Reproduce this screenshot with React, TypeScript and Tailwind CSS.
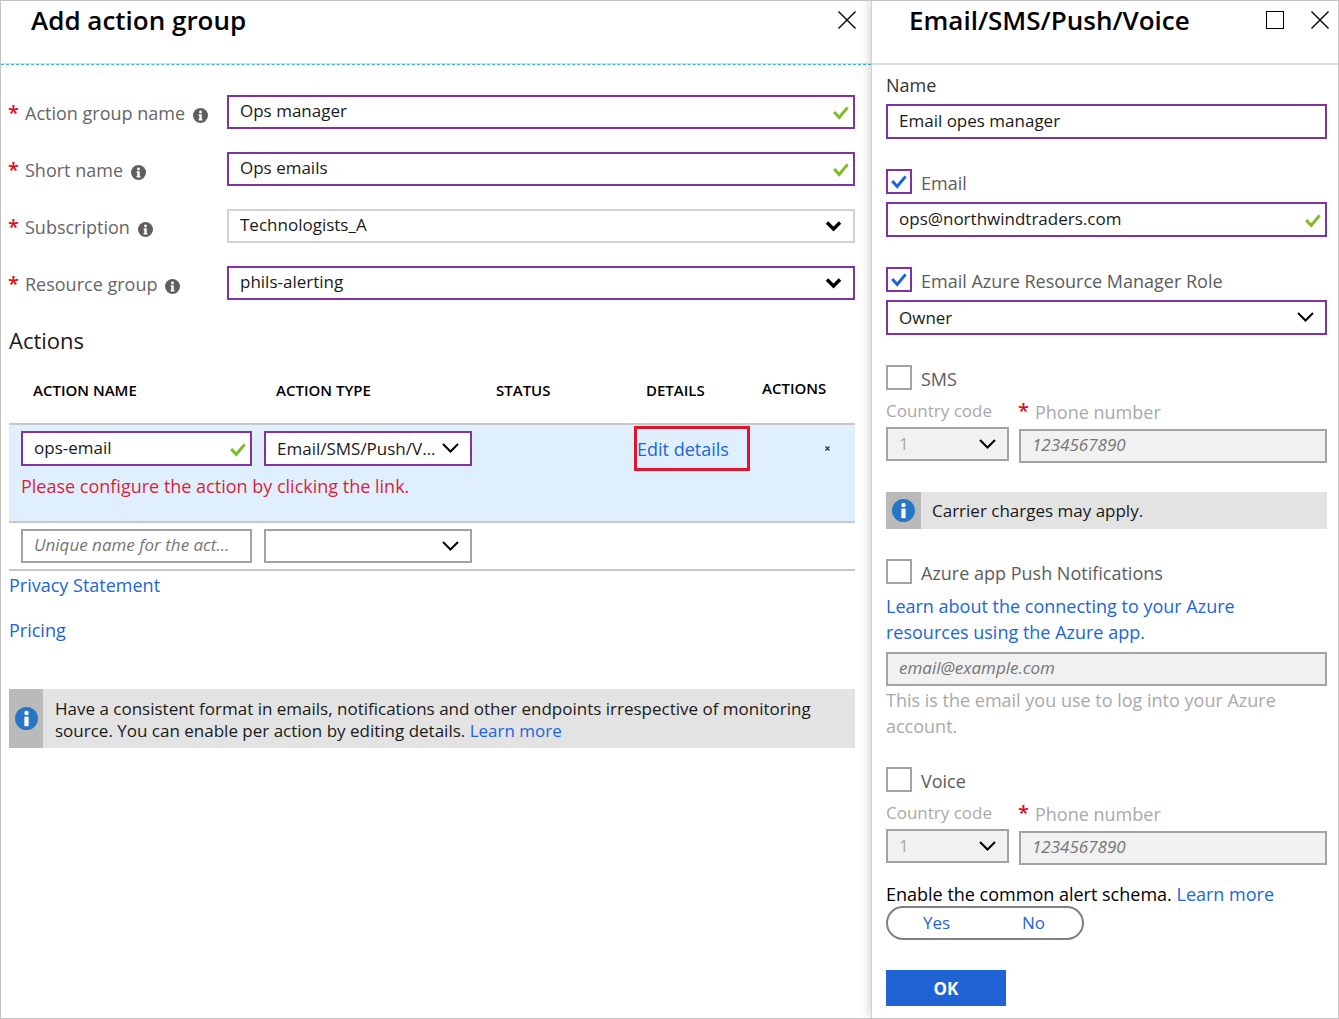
import React from "react";

const label = "text-lg leading-[26px]";
const box =
  "block w-full border-2 pl-[11px] text-[17px] leading-5 outline-none rounded-none text-ellipsis placeholder:italic placeholder:text-[#767676] placeholder:opacity-100";
const purple = "border-[#8133a3] bg-white text-[#1a1a1a]";
const gray = "border-[#a3a3a3] bg-white text-[#1a1a1a]";
const disabledBox = "h-[34px] border-[#a3a3a3] bg-[#f1f1f1] text-[#a9a9a9]";
const link = "text-[#2165d8] hover:underline";

function CloseIcon() {
  return (
    <svg width="20" height="20" viewBox="0 0 20 20" fill="none" stroke="#111" strokeWidth="1.5">
      <path d="M1.5 1.5 18.5 18.5M18.5 1.5 1.5 18.5" />
    </svg>
  );
}

function Check({ color, className }: { color: string; className: string }) {
  return (
    <svg className={`pointer-events-none absolute ${className}`} width="16" height="14" viewBox="0 0 16 14" fill="none" stroke={color} strokeWidth="3">
      <path d="M1.2 6 6.2 11.4 14.6 1.4" />
    </svg>
  );
}

function Chevron({ bold }: { bold?: boolean }) {
  return (
    <svg
      className="pointer-events-none absolute top-[11px] right-3"
      width="18"
      height="12"
      viewBox="0 0 18 12"
      fill="none"
      stroke="#000"
      strokeWidth={bold ? 3.4 : 2}
    >
      <path d={bold ? "M2 2.500 8.500 9 15 2.500" : "M1 2 8.500 9.500 16 2"} />
    </svg>
  );
}

function InfoDot() {
  return (
    <svg className="shrink-0" width="15" height="15" viewBox="0 0 24 24" aria-hidden="true">
      <circle cx="12" cy="12" r="12" fill="#5f5f5f" />
      <circle cx="12" cy="6.3" r="2.3" fill="#fff" />
      <path d="M9 10h5v7.5h1V20H9v-2.5h1v-5H9z" fill="#fff" />
    </svg>
  );
}

function NoticeDot() {
  return (
    <svg className="shrink-0" width="23" height="23" viewBox="0 0 24 24" aria-hidden="true">
      <circle cx="12" cy="12" r="12" fill="#2776c6" />
      <circle cx="12" cy="6.3" r="2.3" fill="#fff" />
      <path d="M9.8 10h4.4v10H9.8z" fill="#fff" />
    </svg>
  );
}

function Select({
  id,
  value,
  tone,
  bold,
  disabled,
  aria,
}: {
  id: string;
  value: string;
  tone: string;
  bold?: boolean;
  disabled?: boolean;
  aria?: string;
}) {
  return (
    <div className="relative">
      <select id={id} disabled={disabled} aria-label={aria} className={`${box} ${tone} appearance-none truncate pr-[30px] opacity-100`}>
        <option>{value}</option>
      </select>
      <Chevron bold={bold} />
    </div>
  );
}

function Asterisk() {
  return <span className="-ml-px w-[9px] text-xl leading-6 font-semibold text-[#e00b1c]">*</span>;
}

function FormRow({ id, title, children }: { id: string; title: string; children: React.ReactNode }) {
  return (
    <div className="flex h-[34px] items-center">
      <div className="flex w-[218px] shrink-0 items-center gap-2 pt-0.5">
        <Asterisk />
        <label htmlFor={id} className={`${label} whitespace-nowrap text-[#666]`}>
          {title}
        </label>
        <span className="pt-1">
          <InfoDot />
        </span>
      </div>
      <div className="min-w-0 flex-1">{children}</div>
    </div>
  );
}

function CheckRow({ id, title, checked }: { id: string; title: string; checked?: boolean }) {
  return (
    <div className="flex h-[25px] items-center gap-[9px]">
      <span className="relative block h-[25px] w-[26px]">
        <input
          id={id}
          type="checkbox"
          defaultChecked={checked}
          className="peer block h-[25px] w-[26px] appearance-none border-2 border-[#a3a3a3] bg-white checked:border-[#8133a3]"
        />
        <Check color="#1f62d6" className="top-1.5 left-[5px] hidden peer-checked:block" />
      </span>
      <label htmlFor={id} className={`${label} pt-0.5 text-[#5c5c5c]`}>
        {title}
      </label>
    </div>
  );
}

function PhoneFields({ prefix }: { prefix: string }) {
  return (
    <div className="mt-2 flex gap-[10px]">
      <div className="w-[123px] shrink-0">
        <label htmlFor={`${prefix}-code`} className="mb-[3px] block text-[17px] leading-[26px] text-[#a9a9a9]">
          Country code
        </label>
        <Select id={`${prefix}-code`} value="1" tone={disabledBox} disabled />
      </div>
      <div className="min-w-0 flex-1">
        <label htmlFor={`${prefix}-phone`} className={`${label} mb-1 flex gap-2 pt-px text-[#a9a9a9]`}>
          <Asterisk />
          Phone number
        </label>
        <input id={`${prefix}-phone`} disabled placeholder="1234567890" className={`${box} ${disabledBox} pb-1 pl-3`} />
      </div>
    </div>
  );
}

function ActionGroupPanel() {
  const head = "text-left align-middle text-[15px] leading-5 font-semibold";
  return (
    <main className="min-w-0 flex-1">
      <header className="flex h-[62px] items-start justify-between pr-[14px] pl-[30px]">
        <h1 className="pt-[3px] text-[26px] leading-8 font-semibold">Add action group</h1>
        <button aria-label="Close" className="pt-[9px]">
          <CloseIcon />
        </button>
      </header>
      <div className="border-t border-[#dcdcdc]">
        <div className="border-t border-dashed border-[#35b4ea]" />
      </div>
      <div className="pt-[30px] pr-4 pl-2">
        <form className="flex flex-col gap-[23px]">
          <FormRow id="group-name" title="Action group name">
            <div className="relative">
              <input id="group-name" defaultValue="Ops manager" className={`${box} ${purple} h-[34px] pb-1`} />
              <Check color="#7fba27" className="top-[11px] right-[6px]" />
            </div>
          </FormRow>
          <FormRow id="short-name" title="Short name">
            <div className="relative">
              <input id="short-name" defaultValue="Ops emails" className={`${box} ${purple} h-[34px] pb-1`} />
              <Check color="#7fba27" className="top-[11px] right-[6px]" />
            </div>
          </FormRow>
          <FormRow id="subscription" title="Subscription">
            <Select id="subscription" value="Technologists_A" tone="h-[34px] border-[#d2d2d2] bg-white pb-0.5 text-[#1a1a1a]" bold />
          </FormRow>
          <FormRow id="resource-group" title="Resource group">
            <Select id="resource-group" value="phils-alerting" tone={`${purple} h-[34px] pb-0.5`} bold />
          </FormRow>
        </form>

        <h2 className="mt-6 mb-px text-[22px] leading-8 text-[#1a1a1a]">Actions</h2>

        <table className="w-full table-fixed border-collapse">
          <colgroup>
            <col className="w-[243px]" />
            <col className="w-[220px]" />
            <col className="w-[162px]" />
            <col className="w-[116px]" />
            <col />
          </colgroup>
          <thead>
            <tr className="h-[67px] border-b-2 border-[#c8c8c8]">
              <th className={`${head} pl-6`}>ACTION NAME</th>
              <th className={`${head} pl-6`}>ACTION TYPE</th>
              <th className={`${head} pl-6`}>STATUS</th>
              <th className={`${head} pl-3`}>DETAILS</th>
              <th className={`${head} pb-1 pl-3`}>ACTIONS</th>
            </tr>
          </thead>
          <tbody>
            <tr className="bg-[#e0effe]">
              <td className="pt-[6px] pl-3">
                <div className="relative">
                  <input aria-label="Action name" defaultValue="ops-email" className={`${box} ${purple} h-[35px] pb-0.5`} />
                  <Check color="#7fba27" className="top-3 right-[6px]" />
                </div>
              </td>
              <td className="pt-[6px] pl-3">
                <Select id="type-1" aria="Action type" value="Email/SMS/Push/Voice" tone={`${purple} h-[35px]`} />
              </td>
              <td />
              <td className="relative pt-[6px] pl-[3px]">
                <a href="#details" className={`${link} text-lg`}>
                  Edit details
                </a>
                <span className="pointer-events-none absolute top-px left-0 h-[45px] w-[116px] border-[3px] border-[#e0142c]" />
              </td>
              <td className="pt-[6px] pl-[75px]">
                <button aria-label="Remove action" className="flex">
                  <svg width="5" height="5" viewBox="0 0 5 5" stroke="#333" strokeWidth="1.3">
                    <path d="M.5.5 4.5 4.5M4.5.5.5 4.5" />
                  </svg>
                </button>
              </td>
            </tr>
            <tr className="h-[56px] border-b-2 border-[#c8c8c8] bg-[#e0effe]">
              <td colSpan={5} className="pt-[7px] pl-3 align-top text-lg leading-[26px] text-[#dc1f3a]">
                Please configure the action by clicking the link.
              </td>
            </tr>
            <tr className="border-b-2 border-[#c8c8c8]">
              <td className="py-[6px] pl-3">
                <input aria-label="New action name" placeholder="Unique name for the action" className={`${box} ${gray} h-[34px] pr-5 pb-1`} />
              </td>
              <td className="py-[6px] pl-3">
                <Select id="type-2" aria="New action type" value="" tone={`${gray} h-[34px]`} />
              </td>
              <td colSpan={3} />
            </tr>
          </tbody>
        </table>

        <p className="mt-px text-lg leading-[26px]">
          <a href="#privacy" className={link}>
            Privacy Statement
          </a>
        </p>
        <p className="mt-[19px] text-lg leading-[26px]">
          <a href="#pricing" className={link}>
            Pricing
          </a>
        </p>

        <div className="mt-[46px] flex bg-[#e3e3e3]">
          <div className="flex w-[34px] shrink-0 items-center justify-center bg-[#bababa]">
            <NoticeDot />
          </div>
          <p className="pt-[9px] pr-8 pb-[6px] pl-3 text-[17px] leading-[22px] text-[#1a1a1a]">
            Have a consistent format in emails, notifications and other endpoints irrespective of monitoring source. You can enable per action by editing details.{" "}
            <a href="#schema" className={link}>
              Learn more
            </a>
          </p>
        </div>
      </div>
    </main>
  );
}

function NotificationPanel() {
  return (
    <aside className="w-[467px] shrink-0 border-l border-[#d0d0d0] bg-white shadow-[-3px_0_8px_rgba(0,0,0,0.14)]">
      <header className="flex h-[62px] items-start pr-2 pl-[37px]">
        <h2 className="flex-1 pt-[3px] text-[26px] leading-8 font-semibold">Email/SMS/Push/Voice</h2>
        <button aria-label="Maximize" className="mt-[10px] mr-[26px] h-[18px] w-[18px] border border-black" />
        <button aria-label="Close panel" className="pt-[9px]">
          <CloseIcon />
        </button>
      </header>
      <div className="border-t-2 border-[#dcdcdc]" />
      <form className="pt-[7px] pr-[11px] pb-3 pl-[14px]">
        <label htmlFor="name" className={`${label} mb-[6px] block text-[#333]`}>
          Name
        </label>
        <input id="name" defaultValue="Email opes manager" className={`${box} ${purple} mb-[30px] h-[35px] pb-0.5`} />

        <CheckRow id="email" title="Email" checked />
        <div className="relative mt-2 mb-[30px]">
          <input aria-label="Email address" defaultValue="ops@northwindtraders.com" className={`${box} ${purple} h-[35px] pb-0.5`} />
          <Check color="#7fba27" className="top-3 right-[6px]" />
        </div>

        <CheckRow id="role" title="Email Azure Resource Manager Role" checked />
        <div className="mt-2 mb-[30px]">
          <Select id="role-name" aria="Role" value="Owner" tone={`${purple} h-[35px]`} />
        </div>

        <CheckRow id="sms" title="SMS" />
        <PhoneFields prefix="sms" />

        <div className="mt-[29px] mb-[30px] flex h-[37px] bg-[#e3e3e3]">
          <div className="flex w-[35px] shrink-0 items-center justify-center bg-[#bababa]">
            <NoticeDot />
          </div>
          <p className="self-center pl-[11px] text-[17px] text-[#1a1a1a]">Carrier charges may apply.</p>
        </div>

        <CheckRow id="push" title="Azure app Push Notifications" />
        <p className={`${label} mt-[9px] mb-[7px] pr-12`}>
          <a href="#azure-app" className={link}>
            Learn about the connecting to your Azure resources using the Azure app.
          </a>
        </p>
        <input aria-label="Azure account email" disabled placeholder="email@example.com" className={`${box} ${disabledBox} pb-1`} />
        <p className={`${label} mt-px mb-7 text-[#a9a9a9]`}>This is the email you use to log into your Azure account.</p>

        <CheckRow id="voice" title="Voice" />
        <PhoneFields prefix="voice" />

        <fieldset className="mt-[19px] mb-[30px]">
          <legend className="mb-0.5 text-lg leading-5">
            Enable the common alert schema.{" "}
            <a href="#common-schema" className={link}>
              Learn more
            </a>
          </legend>
          <div className="grid h-[34px] w-[198px] grid-cols-2 items-center rounded-full border-2 border-[#808080] text-center text-[17px] text-[#2165d8]">
            <label className="has-checked:font-bold">
              <input type="radio" name="schema" value="yes" className="sr-only" />
              Yes
            </label>
            <label className="has-checked:font-bold">
              <input type="radio" name="schema" value="no" className="sr-only" />
              No
            </label>
          </div>
        </fieldset>

        <button type="button" className="block h-9 w-[120px] bg-[#2063d5] pt-0.5 text-[17px] font-bold text-white">
          OK
        </button>
      </form>
    </aside>
  );
}

export default function App() {
  return (
    <div className="flex min-h-screen overflow-hidden border border-[#c3c3c3] bg-white font-['Open_Sans','Noto_Sans',sans-serif] text-black">
      <ActionGroupPanel />
      <NotificationPanel />
    </div>
  );
}
